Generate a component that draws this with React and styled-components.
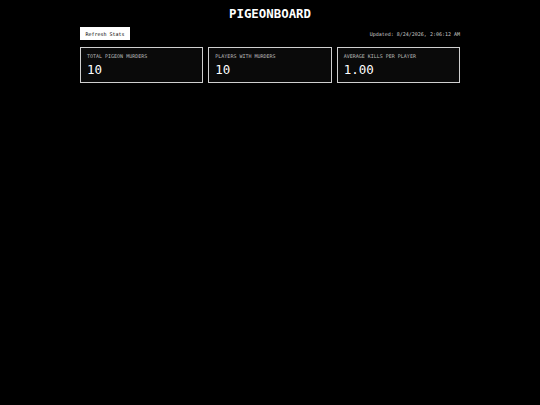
import React from 'react';
import styled, { createGlobalStyle } from 'styled-components';

const GlobalStyle = createGlobalStyle`
  html, body {
    margin: 0;
    padding: 0;
    background: #000;
    color: #fff;
    font-family: "DejaVu Sans Mono", "Liberation Mono", monospace;
  }
`;

const Page = styled.div`
  width: 380px;
  margin: 0 auto;
  padding-top: 6px;
`;

const Title = styled.h1`
  margin: 0;
  font-size: 12.4px;
  font-weight: bold;
  text-align: center;
  line-height: 16px;
`;

const Toolbar = styled.div`
  display: flex;
  justify-content: space-between;
  align-items: center;
  margin-top: 5px;
`;

const RefreshButton = styled.button`
  background: #fff;
  color: #000;
  border: none;
  font-family: inherit;
  font-size: 5px;
  width: 50px;
  height: 13px;
  padding: 0;
  cursor: pointer;
`;

const Updated = styled.span`
  font-size: 5px;
  color: #ccc;
`;

const Stats = styled.div`
  display: grid;
  grid-template-columns: repeat(3, 1fr);
  gap: 5px;
  margin-top: 7px;
`;

const Card = styled.div`
  border: 1px solid #d0d0d0;
  background: #0a0a0a;
  height: 36px;
  box-sizing: border-box;
  padding: 5px 6px 0;
`;

const Label = styled.div`
  font-size: 5px;
  color: #bbb;
  line-height: 6px;
`;

const Value = styled.div`
  font-size: 12.5px;
  line-height: 15px;
  margin-top: 3px;
`;

const stats = [
  { label: 'TOTAL PIGEON MURDERS', value: '10' },
  { label: 'PLAYERS WITH MURDERS', value: '10' },
  { label: 'AVERAGE KILLS PER PLAYER', value: '1.00' },
];

export default function App() {
  return (
    <>
      <GlobalStyle />
      <Page>
        <Title>PIGEONBOARD</Title>
        <Toolbar>
          <RefreshButton>Refresh Stats</RefreshButton>
          <Updated>Updated: 8/24/2026, 2:06:12 AM</Updated>
        </Toolbar>
        <Stats>
          {stats.map((s) => (
            <Card key={s.label}>
              <Label>{s.label}</Label>
              <Value>{s.value}</Value>
            </Card>
          ))}
        </Stats>
      </Page>
    </>
  );
}
